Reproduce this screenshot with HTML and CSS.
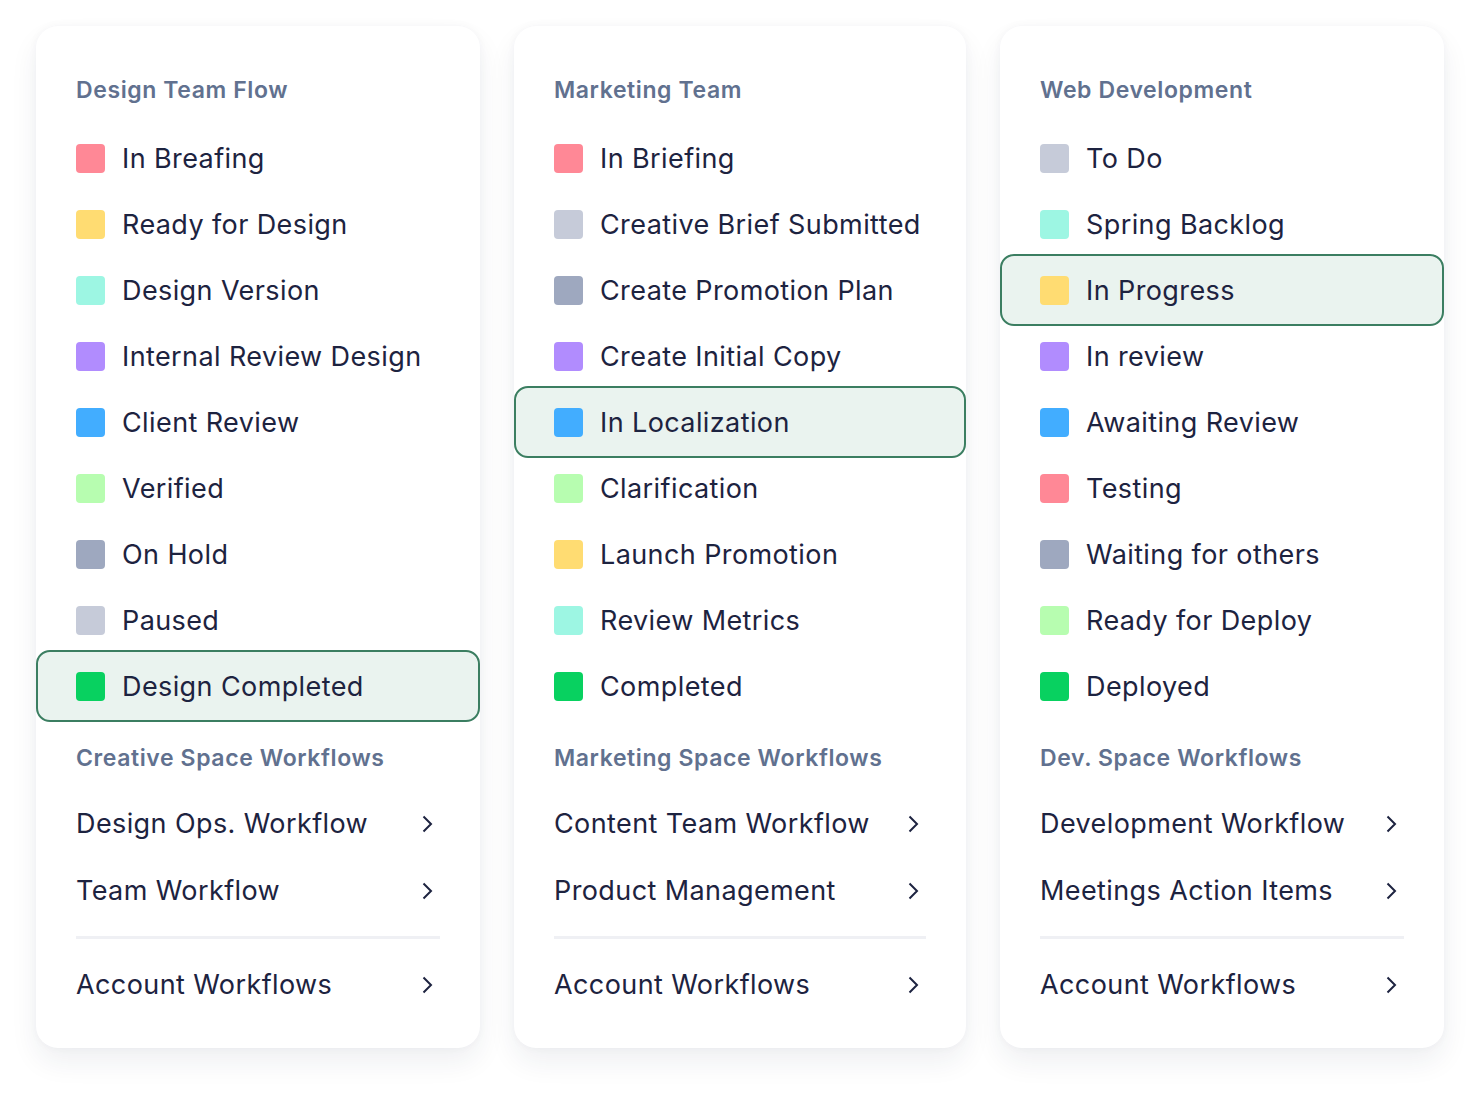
FILE: index.html
```html
<!DOCTYPE html>
<html lang="en">
<head>
  <meta charset="UTF-8">
  <meta name="viewport" content="width=device-width, initial-scale=1.0">
  <title>Workflows</title>
  <link rel="stylesheet" href="styles.css">
</head>
<body>
  <div class="boards">

    <!-- Design -->
    <div class="card card-narrow">
      <h2 class="card-title">Design Team Flow</h2>
      <ul class="status-list">
        <li class="status"><span class="swatch pink"></span>In Breafing</li>
        <li class="status"><span class="swatch yellow"></span>Ready for Design</li>
        <li class="status"><span class="swatch mint"></span>Design Version</li>
        <li class="status"><span class="swatch purple"></span>Internal Review Design</li>
        <li class="status"><span class="swatch blue"></span>Client Review</li>
        <li class="status"><span class="swatch lime"></span>Verified</li>
        <li class="status"><span class="swatch slate"></span>On Hold</li>
        <li class="status"><span class="swatch silver"></span>Paused</li>
        <li class="status selected"><span class="swatch green"></span>Design Completed</li>
      </ul>
      <h3 class="section-title">Creative Space Workflows</h3>
      <a class="link-row" href="#">Design Ops. Workflow<svg viewBox="0 0 24 24"><path d="M7.5 4.5l7.5 7.5-7.5 7.5"/></svg></a>
      <a class="link-row" href="#">Team Workflow<svg viewBox="0 0 24 24"><path d="M7.5 4.5l7.5 7.5-7.5 7.5"/></svg></a>
      <hr class="divider">
      <a class="link-row" href="#">Account Workflows<svg viewBox="0 0 24 24"><path d="M7.5 4.5l7.5 7.5-7.5 7.5"/></svg></a>
    </div>

    <!-- Marketing -->
    <div class="card card-wide">
      <h2 class="card-title">Marketing Team</h2>
      <ul class="status-list">
        <li class="status"><span class="swatch pink"></span>In Briefing</li>
        <li class="status"><span class="swatch silver"></span>Creative Brief Submitted</li>
        <li class="status"><span class="swatch slate"></span>Create Promotion Plan</li>
        <li class="status"><span class="swatch purple"></span>Create Initial Copy</li>
        <li class="status selected"><span class="swatch blue"></span>In Localization</li>
        <li class="status"><span class="swatch lime"></span>Clarification</li>
        <li class="status"><span class="swatch yellow"></span>Launch Promotion</li>
        <li class="status"><span class="swatch mint"></span>Review Metrics</li>
        <li class="status"><span class="swatch green"></span>Completed</li>
      </ul>
      <h3 class="section-title">Marketing Space Workflows</h3>
      <a class="link-row" href="#">Content Team Workflow<svg viewBox="0 0 24 24"><path d="M7.5 4.5l7.5 7.5-7.5 7.5"/></svg></a>
      <a class="link-row" href="#">Product Management<svg viewBox="0 0 24 24"><path d="M7.5 4.5l7.5 7.5-7.5 7.5"/></svg></a>
      <hr class="divider">
      <a class="link-row" href="#">Account Workflows<svg viewBox="0 0 24 24"><path d="M7.5 4.5l7.5 7.5-7.5 7.5"/></svg></a>
    </div>

    <!-- Web dev -->
    <div class="card card-narrow">
      <h2 class="card-title">Web Development</h2>
      <ul class="status-list">
        <li class="status"><span class="swatch silver"></span>To Do</li>
        <li class="status"><span class="swatch mint"></span>Spring Backlog</li>
        <li class="status selected"><span class="swatch yellow"></span>In Progress</li>
        <li class="status"><span class="swatch purple"></span>In review</li>
        <li class="status"><span class="swatch blue"></span>Awaiting Review</li>
        <li class="status"><span class="swatch pink"></span>Testing</li>
        <li class="status"><span class="swatch slate"></span>Waiting for others</li>
        <li class="status"><span class="swatch lime"></span>Ready for Deploy</li>
        <li class="status"><span class="swatch green"></span>Deployed</li>
      </ul>
      <h3 class="section-title">Dev. Space Workflows</h3>
      <a class="link-row" href="#">Development Workflow<svg viewBox="0 0 24 24"><path d="M7.5 4.5l7.5 7.5-7.5 7.5"/></svg></a>
      <a class="link-row" href="#">Meetings Action Items<svg viewBox="0 0 24 24"><path d="M7.5 4.5l7.5 7.5-7.5 7.5"/></svg></a>
      <hr class="divider">
      <a class="link-row" href="#">Account Workflows<svg viewBox="0 0 24 24"><path d="M7.5 4.5l7.5 7.5-7.5 7.5"/></svg></a>
    </div>

  </div>
</body>
</html>
```

FILE: styles.css
```css
/* General */
body {
  margin: 0;
  background: #fff;
  font-family: 'Inter', 'Noto Sans', sans-serif;
  color: #1d2340;
}

.boards {
  display: flex;
  align-items: stretch;
  gap: 34px;
  padding: 26px 36px 47px;
}

/* Cards */
.card {
  background: #fff;
  border-radius: 22px;
  box-shadow: 0 14px 28px rgba(30, 40, 70, 0.07), 0 0 8px rgba(30, 40, 70, 0.04);
  padding: 50px 40px 30px;
  box-sizing: border-box;
  display: flex;
  flex-direction: column;
}

.card-narrow { width: 444px; }
.card-wide { width: 452px; }

.card-title,
.section-title {
  margin: 0;
  font-size: 23px;
  line-height: 28px;
  font-weight: 600;
  letter-spacing: 0.6px;
  color: #61718f;
}

/* Status list */
.status-list {
  list-style: none;
  margin: 21px 0 0;
  padding: 0;
}

.status {
  display: flex;
  align-items: center;
  gap: 17px;
  height: 66px;
  font-size: 27px;
  letter-spacing: 0.4px;
  color: #1d2340;
}

.status.selected {
  height: 72px;
  margin: -3px -40px;
  padding: 0 38px;
  border: 2px solid #3b7e61;
  border-radius: 14px;
  background: #eaf3ef;
  box-sizing: border-box;
}

.swatch {
  width: 29px;
  height: 29px;
  border-radius: 4px;
  flex: none;
}

.pink { background: #ff8896; }
.yellow { background: #ffdc72; }
.mint { background: #9df6e3; }
.purple { background: #b18cfe; }
.blue { background: #42adff; }
.lime { background: #b7fdb0; }
.slate { background: #9ea8bf; }
.silver { background: #c6cbd9; }
.green { background: #08d160; }

/* Space workflows */
.section-title {
  margin-top: 25px;
  margin-bottom: 18px;
}

.link-row {
  display: flex;
  align-items: center;
  justify-content: space-between;
  height: 67px;
  font-size: 27px;
  letter-spacing: 0.4px;
  color: #1d2340;
  text-decoration: none;
}

.link-row svg {
  width: 24px;
  height: 24px;
  fill: none;
  stroke: #1d2340;
  stroke-width: 2;
}

.divider {
  border: none;
  height: 3px;
  background: #eff0f4;
  margin: 12px 0;
}
```
